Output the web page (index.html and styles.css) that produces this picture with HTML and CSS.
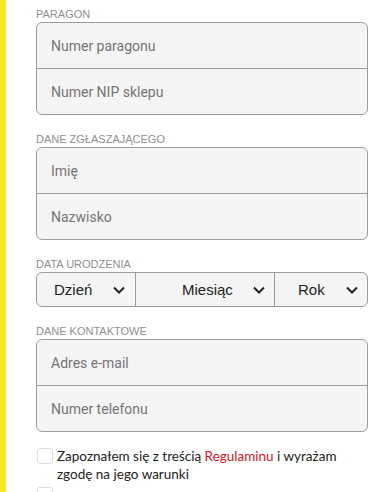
FILE: index.html
```html
<html lang="pl">
  <head>
    <meta charset="UTF-8" />
    <meta name="viewport" content="width=device-width, initial-scale=1.0" />
    <title>Formularz</title>
    <link rel="stylesheet" href="styles.css">
  </head>
  <body>
    <div class="page">
      <form class="form">
        <fieldset class="group">
          <legend class="label">PARAGON</legend>
          <div class="box">
            <input type="text" placeholder="Numer paragonu" />
            <input type="text" placeholder="Numer NIP sklepu" />
          </div>
        </fieldset>

        <fieldset class="group">
          <legend class="label">DANE ZGŁASZAJĄCEGO</legend>
          <div class="box">
            <input type="text" placeholder="Imię" />
            <input type="text" placeholder="Nazwisko" />
          </div>
        </fieldset>

        <fieldset class="group">
          <legend class="label">DATA URODZENIA</legend>
          <div class="box dates">
            <div class="select day">
              <span>Dzień</span>
              <svg class="chev" viewBox="0 0 12 8" width="12" height="8"><path d="M1 1.5l5 5 5-5" fill="none" stroke="#222" stroke-width="2"/></svg>
            </div>
            <div class="select month">
              <span>Miesiąc</span>
              <svg class="chev" viewBox="0 0 12 8" width="12" height="8"><path d="M1 1.5l5 5 5-5" fill="none" stroke="#222" stroke-width="2"/></svg>
            </div>
            <div class="select year">
              <span>Rok</span>
              <svg class="chev" viewBox="0 0 12 8" width="12" height="8"><path d="M1 1.5l5 5 5-5" fill="none" stroke="#222" stroke-width="2"/></svg>
            </div>
          </div>
        </fieldset>

        <fieldset class="group">
          <legend class="label">DANE KONTAKTOWE</legend>
          <div class="box">
            <input type="email" placeholder="Adres e-mail" />
            <input type="text" placeholder="Numer telefonu" />
          </div>
        </fieldset>

        <label class="check">
          <span class="tick"></span>
          <span class="check-text">Zapoznałem się z treścią <a href="#">Regulaminu</a> i wyrażam zgodę na jego warunki</span>
        </label>
        <label class="check">
          <span class="tick"></span>
          <span class="check-text">&nbsp;</span>
        </label>
      </form>
    </div>
  </body>
</html>
```

FILE: styles.css
```css
body {
  margin: 0;
  background: white;
  font-family: "Open Sans", sans-serif;
  overflow: hidden;
}
.page {
  border-left: 6px solid #f8e825;
  height: 492px;
  padding: 8px 13px 0 30px;
  box-sizing: border-box;
  overflow: hidden;
}
.form {
  width: 332px;
}
.group {
  border: 0;
  margin: 0 0 18px;
  padding: 0;
}
.label {
  padding: 0;
  margin-bottom: 1px;
  font-family: "Liberation Sans", sans-serif;
  font-size: 11px;
  color: #8f8f8f;
  line-height: 13px;
}
.box {
  display: flex;
  flex-direction: column;
  background: #f4f4f4;
  border: 1px solid #9c9c9c;
  border-radius: 6px;
  overflow: hidden;
}
.box input {
  height: 45px;
  border: 0;
  background: transparent;
  padding: 0 14px;
  font-family: Roboto, sans-serif;
  font-size: 14px;
  color: #333;
  outline: none;
}
.box input + input {
  border-top: 1px solid #9c9c9c;
  height: 46px;
}
.box input::placeholder {
  color: #757575;
}
.dates {
  flex-direction: row;
  height: 33px;
}
.select {
  display: flex;
  align-items: center;
  justify-content: space-between;
  font-family: "Liberation Sans", sans-serif;
  font-size: 15px;
  color: #222;
  box-sizing: border-box;
}
.select + .select {
  border-left: 1px solid #9c9c9c;
}
.day {
  width: 98px;
  padding: 0 10px 0 17px;
}
.month {
  width: 139px;
  padding: 0 9px 0 46px;
}
.year {
  flex: 1;
  padding: 0 9px 0 23px;
}
.check {
  display: flex;
  gap: 4px;
  margin-top: -3px;
  font-family: Lato, sans-serif;
  font-size: 13.5px;
  line-height: 18px;
  color: #222;
}
.check + .check {
  margin-top: 3px;
}
.check-text {
  max-width: 296px;
}
.tick {
  flex: none;
  width: 14px;
  height: 14px;
  margin: 1px 0 0 1px;
  border: 1px solid #ddd;
  border-radius: 3px;
  background: white;
}
.check a {
  color: #d6121d;
  text-decoration: none;
}
```
